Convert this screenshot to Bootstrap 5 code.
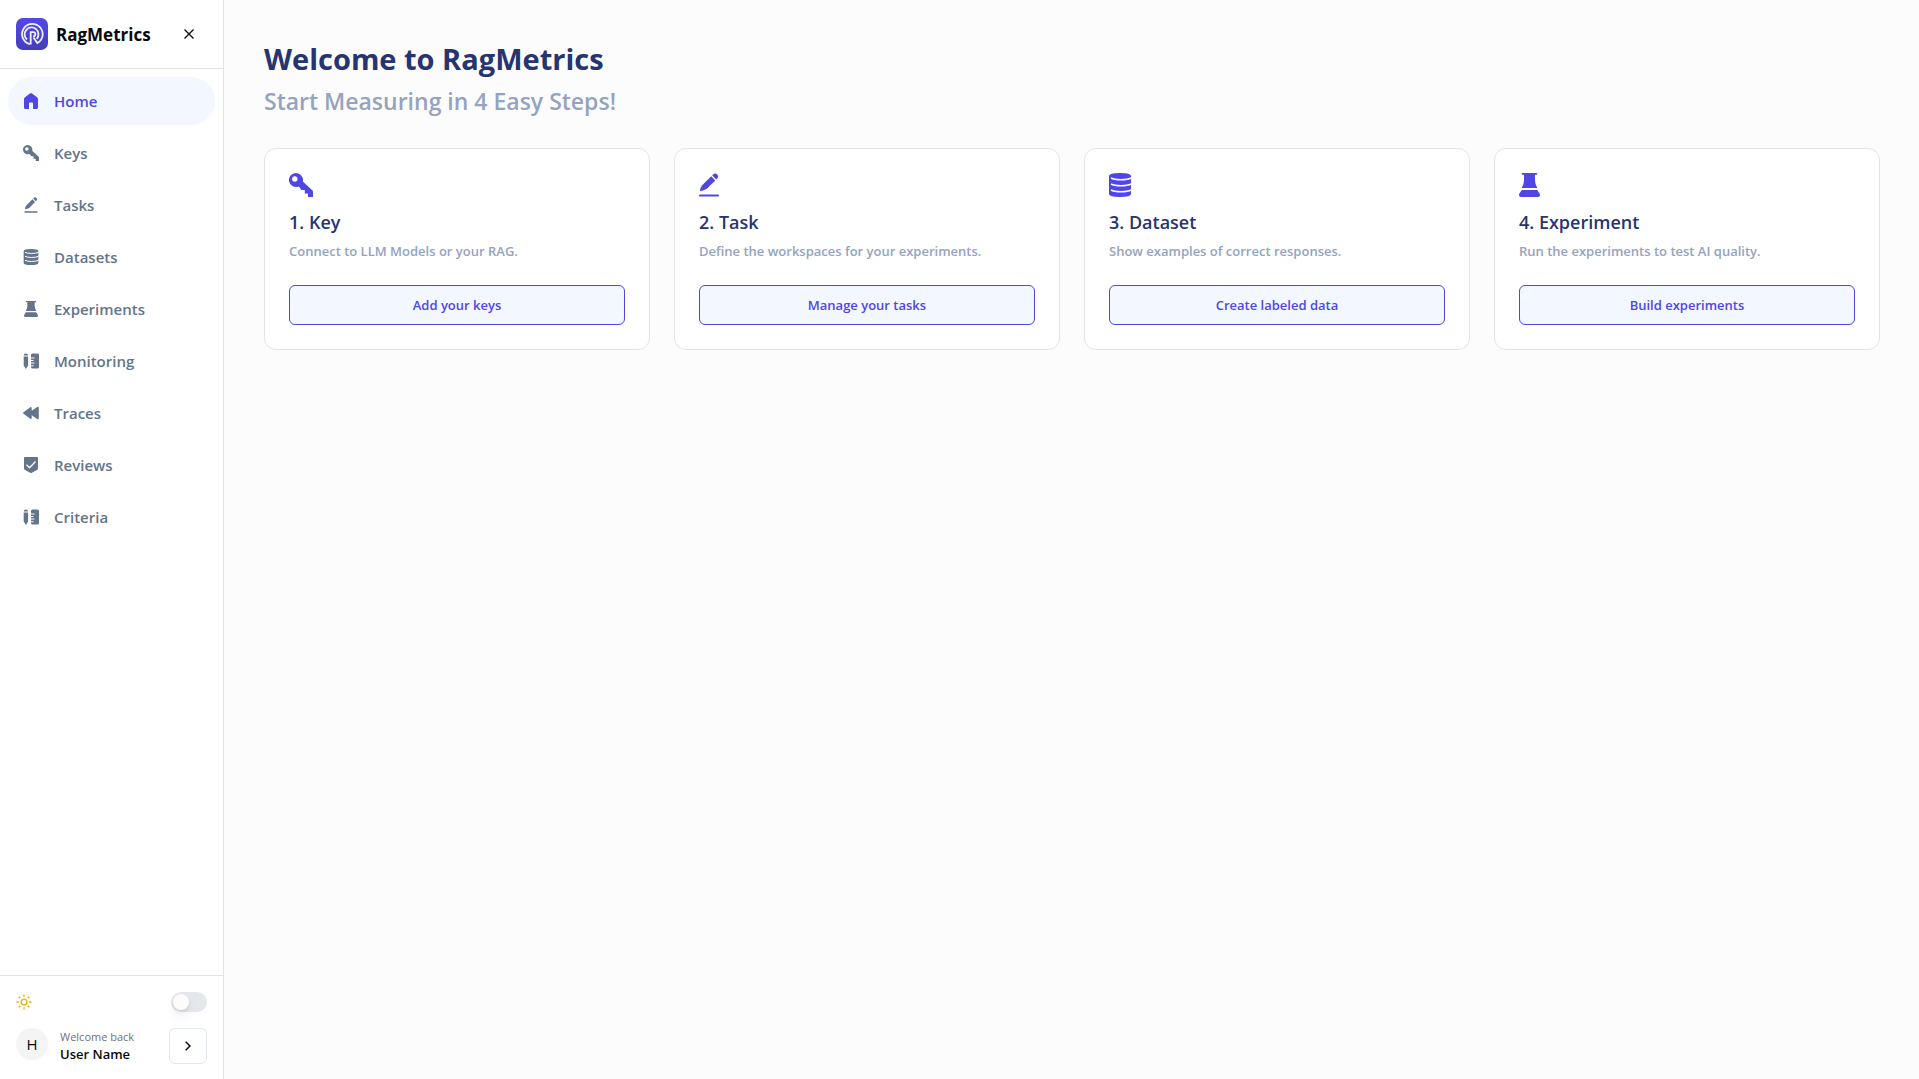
<!DOCTYPE html>
<html lang="en">
<head>
<meta charset="utf-8">
<meta name="viewport" content="width=device-width, initial-scale=1">
<title>RagMetrics</title>
<link href="https://cdn.jsdelivr.net/npm/bootstrap@5.3.0/dist/css/bootstrap.min.css" rel="stylesheet">
<style>
  body { font-family: "Segoe UI", "Open Sans", "Noto Sans", sans-serif; background: #fcfcfc; color: #09090b; font-size: 15px; }
  .sidebar { width: 224px; background: #fff; border-right: 1px solid #e4e4e7; }
  .brand-bar { height: 69px; padding: 0 16px; border-bottom: 1px solid #e4e4e7; }
  .brand-name { font-size: 17px; font-weight: 700; color: #09090b; padding-top: 1px; }
  .close-btn { width: 36px; height: 36px; color: #09090b; }
  .side-nav .nav-link { height: 48px; padding: 0 14px; gap: 15px; border-radius: 24px; color: #64748b; font-weight: 600; }
  .side-nav .nav-link.active { color: #4f46e5; background: #f3f7ff; }
  .nav-icon { width: 16px; height: 16px; margin-left: 1px; }
  .side-foot { padding: 16px 16px 15px; border-top: 1px solid #e4e4e7; }
  .theme-switch { appearance: none; width: 36px; height: 20px; margin: 0; border-radius: 10px; background: #e4e7ec; padding: 2px; }
  .theme-switch::before { content: ""; display: block; width: 16px; height: 16px; border-radius: 50%; background: #fcfcfc; box-shadow: 0 8px 12px rgba(0,0,0,.06), 0 2px 4px rgba(0,0,0,.08); }
  .theme-switch:checked { background: #4f46e5; }
  .theme-switch:checked::before { margin-left: 16px; }
  .avatar { width: 32px; height: 32px; background: #f4f4f5; font-size: 15px; }
  .user-text { padding-top: 1px; }
  .hello { font-size: 11px; line-height: 16px; color: #71717a; }
  .user { font-size: 13px; line-height: 18px; font-weight: 600; }
  .next-btn { width: 38px; height: 36px; border: 1px solid #e2e8f0; border-radius: 6px; background: #fff; color: #09090b; }
  .page { padding: 39px 39px 40px 40px; }
  .page-title { font-size: 29px; line-height: 40px; font-weight: 700; color: #273472; }
  .page-sub { font-size: 23px; line-height: 32px; font-weight: 600; color: #94a3c0; margin: 6px 0 31px; }
  .step { padding: 24px; border: 1px solid #e4e4e7; border-radius: 12px; background: #fff; }
  .step-icon { width: 24px; height: 24px; color: #4f46e5; }
  .step-title { font-size: 18px; line-height: 28px; font-weight: 600; color: #273472; margin: 11px 0 5px; }
  .step-text { font-size: 13px; line-height: 20px; font-weight: 600; color: #94a3c0; margin-bottom: 24px; }
  .step-btn { height: 40px; padding: 1px 0 0; border: 1px solid #4f46e5; border-radius: 6px; background: #f3f7ff; color: #4f46e5; font-size: 13px; font-weight: 600; }
  .step-btn:hover { background: #4f46e5; color: #fff; }
</style>
</head>
<body>
<svg class="d-none" aria-hidden="true">
  <defs>
    <path id="i-home" fill="currentColor" d="M7 0Q7.500 0 8 .4L13.300 4.500Q14 5 14 6V14.500Q14 16 12.500 16H9V10.500Q9 9.500 8 9.500H6Q5 9.500 5 10.500V16H1.500Q0 16 0 14.500V6Q0 5 .7 4.500L6 .4Q6.500 0 7 0Z"/>
    <path id="i-key" fill="currentColor" fill-rule="evenodd" d="M7 0A7 7 0 0 1 13.800 8.600L23.500 17.600Q24 18 24 19V24H19V20.600H15.800V17H12.500L9.800 13.400A7 7 0 1 1 7 0ZM5.800 3.300A2.700 2.700 0 1 0 5.800 8.700 2.700 2.700 0 1 0 5.800 3.300Z"/>
    <g id="i-pen" fill="currentColor"><path d="M12.200 3.300L16.200 7.400 8 15.600Q5 18 1 18.200 1 14.500 3.200 12.200Z"/><path d="M13.200 2.300Q15.800-.8 18.200 1.400 20.400 3.800 17.200 6.400Z"/><rect x="0" y="21.500" width="20" height="2" rx="1"/></g>
    <g id="i-data"><path fill="currentColor" d="M0 3Q0 0 11 0T22 3V21Q22 24 11 24T0 21Z"/><path fill="none" stroke="#fff" stroke-width="1.500" d="M2 5Q5 6.700 12 6.700T22 5M2 11Q5 12.700 12 12.700T22 11M2 17Q5 18.700 12 18.700T22 17"/></g>
    <path id="i-exp" fill="currentColor" d="M3.500 0H17.500Q18.300 0 18.300 .8T17.500 1.700H16V7.500Q16 11 18.300 15H2.700Q5 11 5 7.500V1.700H3.500Q2.700 1.700 2.700 .8T3.500 0ZM2.800 17H18.200L20.600 20.500Q21 21.200 21 22Q21 24 19 24H2Q0 24 0 22Q0 21.200 .4 20.500Z"/>
    <g id="i-rule" fill="currentColor"><path d="M.7 2.600Q.7 .4 2.900 .4T5.100 2.600ZM.7 3.600H5.100V12.500L2.900 16 .7 12.500Z"/><path d="M9.500 .4H14.500Q16 .4 16 1.900V14.100Q16 15.600 14.500 15.600H9.500Q8 15.600 8 14.100V13.200H10.500V12.200H8V10.600H11.500V9.600H8V8H10.500V7H8V5.500H11.500V4.500H8V1.900Q8 .4 9.500 .4Z"/></g>
    <path id="i-back" fill="currentColor" d="M.5 7.200L7.300 2.300Q8.500 1.600 8.700 3V5.800L14.200 2Q15.800 1.200 15.800 2.800V13.200Q15.800 14.800 14.200 14L8.700 10.200V13Q8.500 14.400 7.300 13.700L.5 8.800Q-.4 8 .5 7.200Z"/>
    <g id="i-shield"><path fill="currentColor" d="M1 0H13Q14 0 14 1V11.500Q14 12.400 13 13L7.800 15.700Q7 16.200 6.200 15.700L1 13Q0 12.400 0 11.500V1Q0 0 1 0Z"/><path fill="none" stroke="#fff" stroke-width="1.300" d="M2.500 7.800L5.500 10.800 11.500 4.500"/></g>
  </defs>
</svg>

<div class="d-flex min-vh-100">
  <aside class="sidebar d-flex flex-column flex-shrink-0">
    <header class="brand-bar d-flex align-items-center">
      <svg width="32" height="32" viewBox="0 0 32 32" aria-hidden="true">
        <defs><linearGradient id="lg" x1="0" y1="0" x2="0" y2="1"><stop offset="0" stop-color="#5248ea"/><stop offset="1" stop-color="#443db9"/></linearGradient></defs>
        <rect width="32" height="32" rx="7" fill="url(#lg)"/>
        <g fill="none" stroke="#f0f0ff" stroke-width="1.800">
          <path d="M14 26.200A10.300 10.300 0 1 1 23.300 23.800L21.300 25 17.500 19.500"/>
          <path d="M11 21.500A6.900 6.900 0 1 1 20.800 20.800"/>
          <path d="M14.700 26.500V14.200H17.300Q19.300 14.200 19.300 16.300T17 18.600"/>
        </g>
      </svg>
      <span class="brand-name ms-2">RagMetrics</span>
      <button class="close-btn btn p-0 border-0 ms-auto d-flex align-items-center justify-content-center" type="button" aria-label="Close sidebar">
        <svg width="10" height="10" viewBox="0 0 10 10" fill="none" stroke="currentColor" stroke-width="1.300"><path d="M.5 .5L9.500 9.500M9.500 .5L.5 9.500"/></svg>
      </button>
    </header>
    <nav class="side-nav nav flex-column flex-nowrap gap-1 p-2">
      <a class="nav-link active d-flex align-items-center" href="#" aria-current="page"><svg class="nav-icon" viewBox="0 0 14 16"><use href="#i-home"/></svg>Home</a>
      <a class="nav-link d-flex align-items-center" href="#"><svg class="nav-icon" viewBox="0 0 24 24"><use href="#i-key"/></svg>Keys</a>
      <a class="nav-link d-flex align-items-center" href="#"><svg class="nav-icon" viewBox="0 0 20 24"><use href="#i-pen"/></svg>Tasks</a>
      <a class="nav-link d-flex align-items-center" href="#"><svg class="nav-icon" viewBox="0 0 22 24"><use href="#i-data"/></svg>Datasets</a>
      <a class="nav-link d-flex align-items-center" href="#"><svg class="nav-icon" viewBox="0 0 21 24"><use href="#i-exp"/></svg>Experiments</a>
      <a class="nav-link d-flex align-items-center" href="#"><svg class="nav-icon" viewBox="0 0 16 16"><use href="#i-rule"/></svg>Monitoring</a>
      <a class="nav-link d-flex align-items-center" href="#"><svg class="nav-icon" viewBox="0 0 16 16"><use href="#i-back"/></svg>Traces</a>
      <a class="nav-link d-flex align-items-center" href="#"><svg class="nav-icon" viewBox="0 0 14 16"><use href="#i-shield"/></svg>Reviews</a>
      <a class="nav-link d-flex align-items-center" href="#"><svg class="nav-icon" viewBox="0 0 16 16"><use href="#i-rule"/></svg>Criteria</a>
    </nav>
    <footer class="side-foot mt-auto">
      <div class="d-flex align-items-center justify-content-between mb-3">
        <label for="theme" class="d-flex" aria-label="Dark theme">
          <svg width="16" height="16" viewBox="0 0 16 16" fill="none" stroke="#eab308" stroke-width="1.400"><circle cx="8" cy="8" r="2.900"/><path d="M8 .5V2.800M8 13.200V15.500M.5 8H2.800M13.200 8H15.500M2.700 2.700L4.300 4.300M11.700 11.700L13.300 13.300M13.300 2.700L11.700 4.300M4.300 11.700L2.700 13.300"/></svg>
        </label>
        <input class="theme-switch" type="checkbox" role="switch" id="theme">
      </div>
      <div class="d-flex">
        <div class="avatar rounded-circle d-flex align-items-center justify-content-center me-2">H</div>
        <div class="user-text ms-1">
          <div class="hello">Welcome back</div>
          <div class="user">User Name</div>
        </div>
        <button class="next-btn ms-auto p-0 d-flex align-items-center justify-content-center" type="button" aria-label="Account menu">
          <svg width="6" height="10" viewBox="0 0 6 10" fill="none" stroke="currentColor" stroke-width="1.500"><path d="M.7 .7L5 5 .7 9.300"/></svg>
        </button>
      </div>
    </footer>
  </aside>

  <main class="page flex-grow-1">
    <h1 class="page-title mb-0">Welcome to RagMetrics</h1>
    <p class="page-sub">Start Measuring in 4 Easy Steps!</p>
    <div class="row row-cols-1 row-cols-md-2 row-cols-xl-4 g-4">
      <div class="col"><section class="step">
        <svg class="step-icon d-block" viewBox="0 0 24 24" preserveAspectRatio="xMinYMid"><use href="#i-key"/></svg>
        <h2 class="step-title">1. Key</h2>
        <p class="step-text">Connect to LLM Models or your RAG.</p>
        <button class="step-btn btn w-100" type="button">Add your keys</button>
      </section></div>
      <div class="col"><section class="step">
        <svg class="step-icon d-block" viewBox="0 0 20 24" preserveAspectRatio="xMinYMid"><use href="#i-pen"/></svg>
        <h2 class="step-title">2. Task</h2>
        <p class="step-text">Define the workspaces for your experiments.</p>
        <button class="step-btn btn w-100" type="button">Manage your tasks</button>
      </section></div>
      <div class="col"><section class="step">
        <svg class="step-icon d-block" viewBox="0 0 22 24" preserveAspectRatio="xMinYMid"><use href="#i-data"/></svg>
        <h2 class="step-title">3. Dataset</h2>
        <p class="step-text">Show examples of correct responses.</p>
        <button class="step-btn btn w-100" type="button">Create labeled data</button>
      </section></div>
      <div class="col"><section class="step">
        <svg class="step-icon d-block" viewBox="0 0 21 24" preserveAspectRatio="xMinYMid"><use href="#i-exp"/></svg>
        <h2 class="step-title">4. Experiment</h2>
        <p class="step-text">Run the experiments to test AI quality.</p>
        <button class="step-btn btn w-100" type="button">Build experiments</button>
      </section></div>
    </div>
  </main>
</div>
<script src="https://cdn.jsdelivr.net/npm/bootstrap@5.3.0/dist/js/bootstrap.bundle.min.js"></script>
</body>
</html>
